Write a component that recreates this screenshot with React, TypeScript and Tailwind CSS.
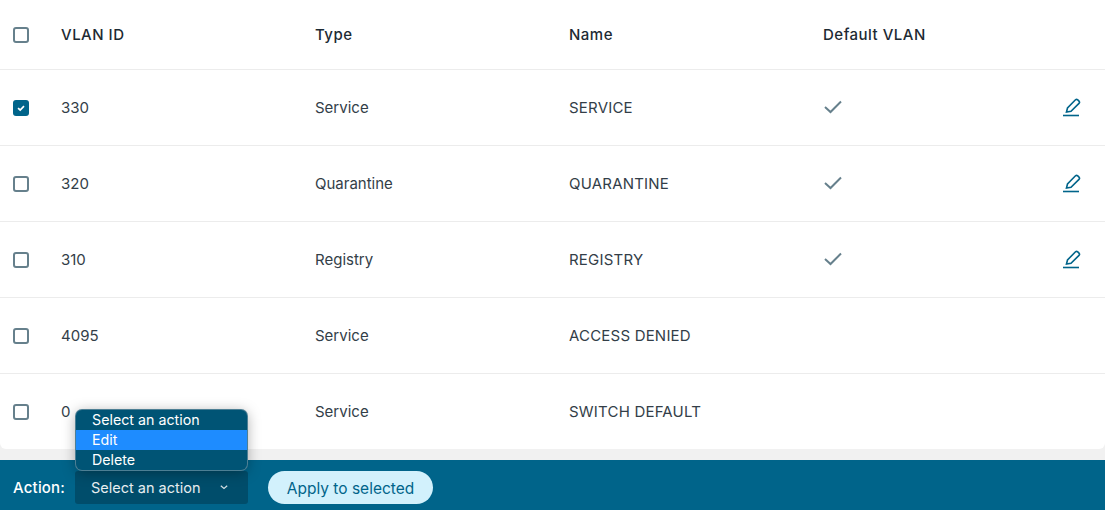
import React from "react";

const rows = [
  { id: "330", type: "Service", name: "SERVICE", def: true, checked: true },
  { id: "320", type: "Quarantine", name: "QUARANTINE", def: true, checked: false },
  { id: "310", type: "Registry", name: "REGISTRY", def: true, checked: false },
  { id: "4095", type: "Service", name: "ACCESS DENIED", def: false, checked: false },
  { id: "0", type: "Service", name: "SWITCH DEFAULT", def: false, checked: false },
];

function Box({ checked }: { checked?: boolean }) {
  return checked ? (
    <span className="flex h-4 w-4 items-center justify-center rounded-[3px] bg-[#00648a]">
      <svg width="10" height="10" viewBox="0 0 10 10" fill="none">
        <path d="M2 5.2 L4.2 7 L8 3.2" stroke="white" strokeWidth="1.7" />
      </svg>
    </span>
  ) : (
    <span className="block h-4 w-4 rounded-[3px] border-2 border-[#66808c] bg-white" />
  );
}

function Check() {
  return (
    <svg width="18" height="14" viewBox="0 0 18 14" fill="none" className="mb-[2px] ml-[1px]">
      <path d="M1 7 L6.5 12 L17 1.5" stroke="#66808c" strokeWidth="2" />
    </svg>
  );
}

function Pencil() {
  return (
    <svg width="18" height="19" viewBox="0 0 18 19" fill="none" stroke="#00648a" strokeWidth="1.6">
      <path d="M3.5 14 L4.5 10 L12.5 1.8 Q13.5 0.9 14.5 1.7 L16.2 3.4 Q17 4.4 16 5.4 L8 13.2 Z" />
      <path d="M0 17.5 H16" />
    </svg>
  );
}

export default function App() {
  return (
    <div className="relative flex h-[510px] w-[1105px] flex-col overflow-hidden bg-[#f1f1f1] font-['Inter',sans-serif] text-[15px] text-[#333e48]">
      <div className="rounded-b-[6px] bg-white">
        <div className="grid h-[70px] grid-cols-[48px_254px_254px_254px_1fr] items-center border-b border-[#ececec] pl-[13px] font-medium tracking-[0.5px] text-[#1d2a33]">
          <Box />
          <span className="pt-[2px]">VLAN ID</span>
          <span className="pt-[2px]">Type</span>
          <span className="pt-[2px]">Name</span>
          <span className="pt-[2px]">Default VLAN</span>
        </div>
        {rows.map((r, i) => (
          <div
            key={r.id}
            className={`grid grid-cols-[48px_254px_254px_254px_1fr] items-center pl-[13px] ${i < rows.length - 1 ? "h-[76px] border-b border-[#ececec]" : "h-[75px]"}`}
          >
            <Box checked={r.checked} />
            <span className="pt-[2px]">{r.id}</span>
            <span className="pt-[2px]">{r.type}</span>
            <span className="pt-[2px] tracking-[0.2px]">{r.name}</span>
            <div className="flex items-center justify-between pr-[24px]">
              {r.def ? <Check /> : <span />}
              {r.def ? <Pencil /> : null}
            </div>
          </div>
        ))}
      </div>
      <div className="mt-auto flex h-[50px] items-center bg-[#00648a] pl-[13px] pt-[5px] text-white">
        <span className="w-[62px] pt-[2px] font-medium tracking-[0.2px]">Action:</span>
        <div className="flex h-[33px] w-[173px] items-center justify-between rounded-[3px] bg-[#004d6b] pl-[16px] pr-[20px] text-[14.5px] text-[#e8eef1]">
          <span className="pt-[1px]">Select an action</span>
          <svg width="8" height="5" viewBox="0 0 8 5" fill="none">
            <path d="M0.8 0.8 L4 3.4 L7.2 0.8" stroke="#d5e0e5" strokeWidth="1.2" />
          </svg>
        </div>
        <button className="ml-[20px] h-[33px] w-[165px] rounded-full bg-[#d2f1fc] pt-[3px] text-center text-[15.5px] text-[#00648a]">
          Apply to selected
        </button>
      </div>
      <div className="absolute left-[76px] top-[410px] w-[171px] overflow-hidden rounded-[6px] bg-[#005475] text-[14.25px] leading-[20px] text-white shadow-[0_0_0_1px_#4d7f94,0_2px_14px_rgba(0,0,0,0.35)]">
        <div className="h-[20px] pl-[16px]">Select an action</div>
        <div className="h-[20px] bg-[#1e8cff] pl-[16px]">Edit</div>
        <div className="h-[20px] pl-[16px]">Delete</div>
      </div>
    </div>
  );
}
